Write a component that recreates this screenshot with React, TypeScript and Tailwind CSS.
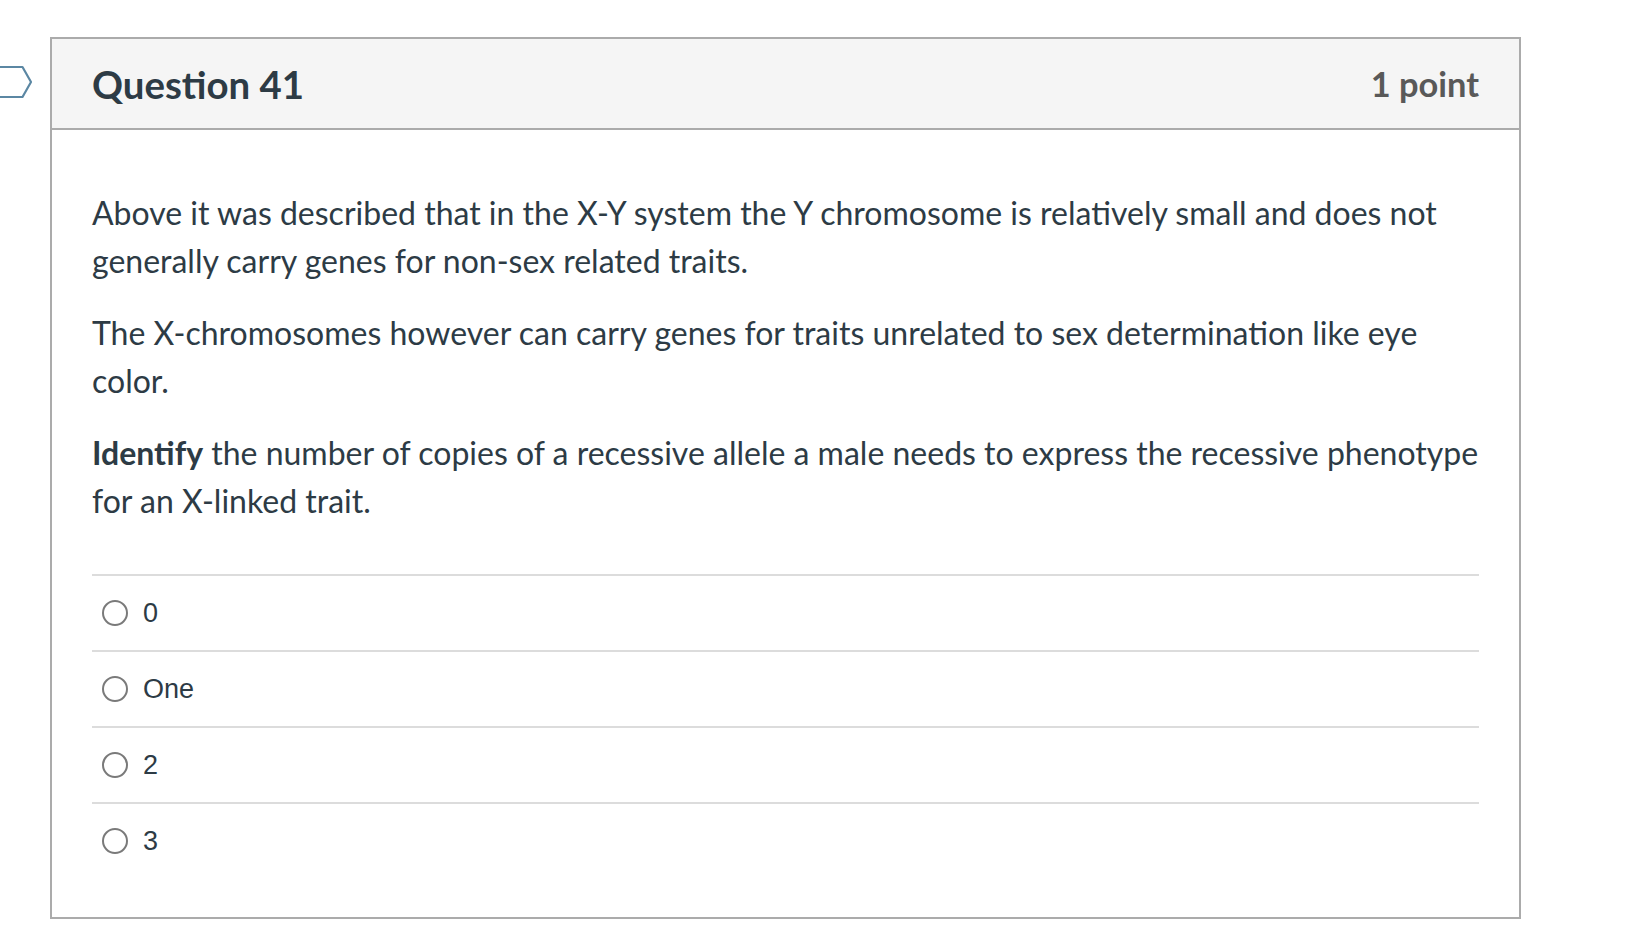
import React from 'react';

const answers = ['0', 'One', '2', '3'];

const Flag: React.FC = () => (
  <svg className="absolute left-0 top-[64px]" width="36" height="36" viewBox="0 0 36 36" fill="none">
    <path d="M-4 3H22.5L31 18L22.5 33H-4" stroke="#5b87a3" strokeWidth="2.2" strokeLinejoin="round" />
  </svg>
);

const App: React.FC = () => {
  return (
    <div className="relative min-h-screen bg-white text-[#2d3b45]" style={{ fontFamily: 'Lato, "Liberation Sans", sans-serif' }}>
      <Flag />
      <div className="pl-[50px] pt-[37px]">
        <div className="w-[1471px] border-2 border-[#ababab]">
          {/* header */}
          <div className="flex h-[91px] items-center justify-between border-b-2 border-[#ababab] bg-[#f5f5f5] px-[40px] pt-[2px]">
            <h2 className="text-[38.4px] font-bold leading-none">Question 41</h2>
            <span className="text-[34.4px] font-bold leading-none text-[#595959]">1 point</span>
          </div>

          {/* body */}
          <div className="px-[40px] pt-[59px] pb-[39px]">
            <div className="text-[32px] leading-[48px]">
              <p>
                Above it was described that in the X-Y system the Y chromosome is relatively small and does not generally carry
                genes for non-sex related traits.
              </p>
              <p className="mt-[24px]">
                The X-chromosomes however can carry genes for traits unrelated to sex determination like eye color.
              </p>
              <p className="mt-[24px]">
                <strong className="font-bold">Identify</strong> the number of copies of a recessive allele a male needs to express
                the recessive phenotype for an X-linked trait.
              </p>
            </div>

            <div className="mt-[49px]">
              {answers.map((a) => (
                <label
                  key={a}
                  className="flex h-[76px] items-center gap-[15px] border-t-2 border-[#dcdcdc] pl-[10px]"
                  style={{ fontFamily: '"Liberation Sans", Arial, sans-serif' }}
                >
                  <span className="block h-[26px] w-[26px] rounded-full border-2 border-[#7a7a7a] bg-white" />
                  <span className="text-[27px] leading-none">{a}</span>
                </label>
              ))}
            </div>
          </div>
        </div>
      </div>
    </div>
  );
};

export default App;
